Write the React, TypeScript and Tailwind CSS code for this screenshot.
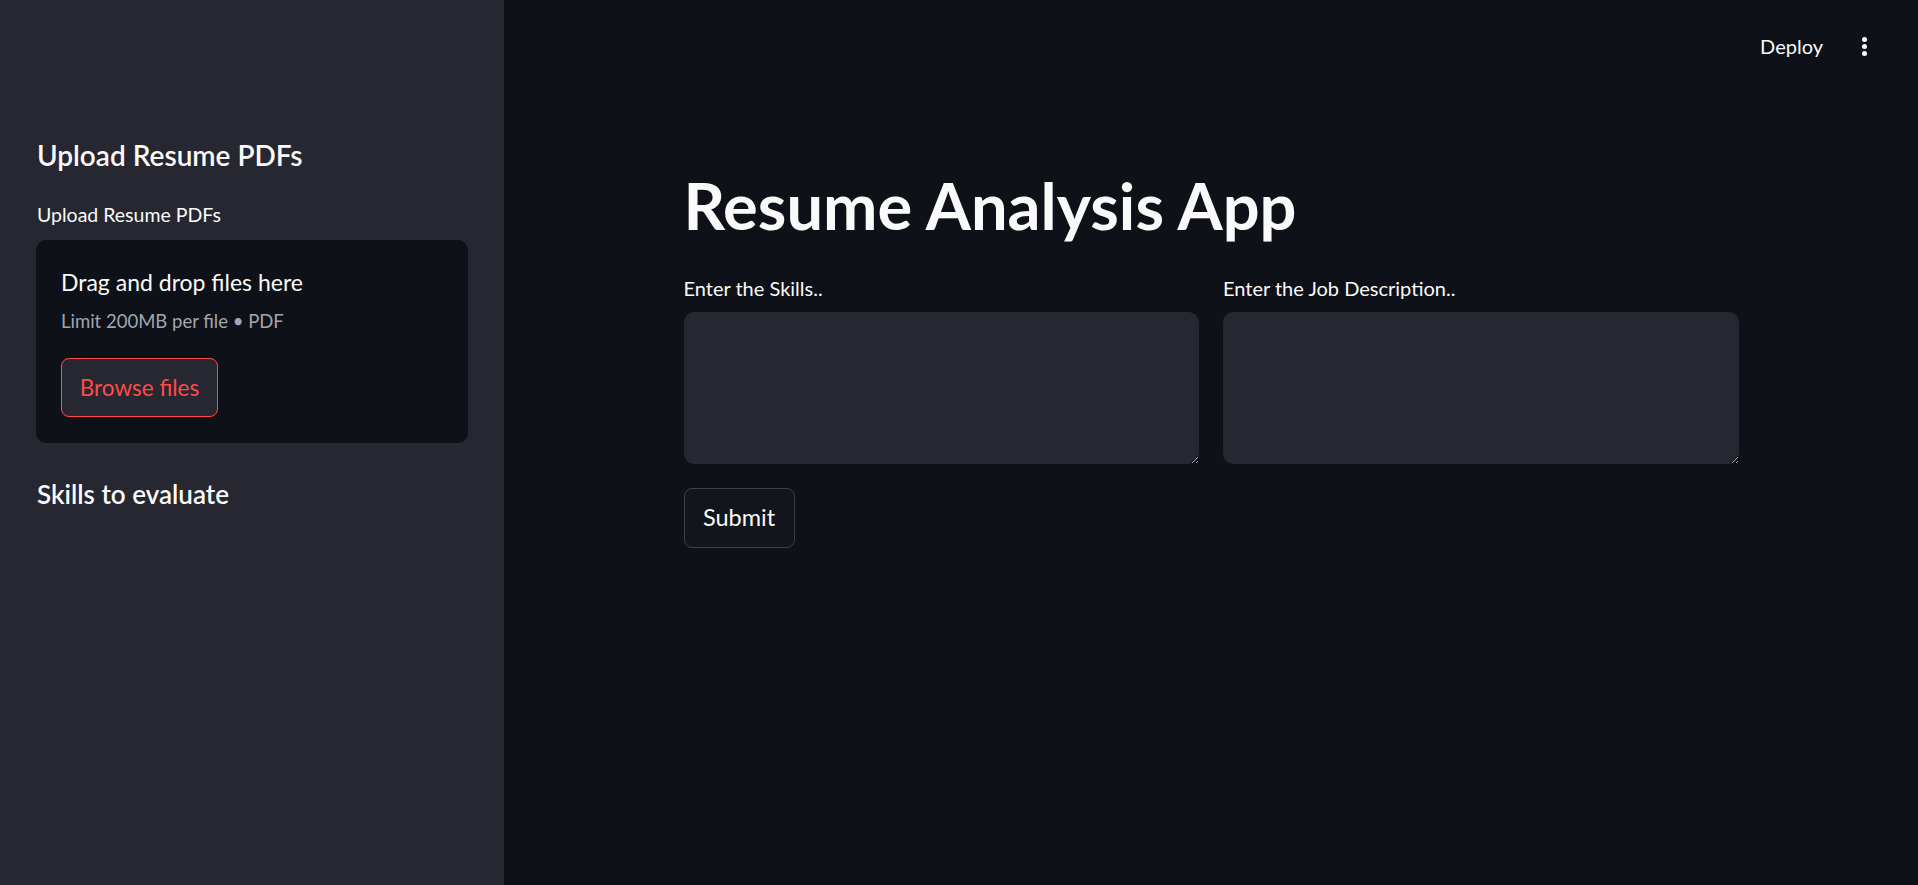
import React from "react";

const font = "font-['Lato',sans-serif]";

const Sidebar = () => {
	return (
		<aside className="w-[504px] shrink-0 h-screen bg-[#262730] px-[36px]">
			<h3 className="mt-[137px] text-[28px] leading-[36px] font-semibold text-[#fafafa] pl-px">
				Upload Resume PDFs
			</h3>
			<p className="mt-[30px] text-[19.5px] leading-[24px] text-[#fafafa] pl-px">Upload Resume PDFs</p>
			<div className="mt-[13px] w-[432px] h-[203px] rounded-[10px] bg-[#0e1117] pl-[25px] pt-[28px]">
				<p className="text-[23px] leading-[28px] text-[#fafafa]">Drag and drop files here</p>
				<p className="mt-[12px] text-[18.5px] leading-[26px] text-[#a3a6b0]">
					Limit 200MB per file • PDF
				</p>
				<button
					type="button"
					className="mt-[24px] w-[157px] h-[59px] rounded-[8px] border border-[#ff4b4b] bg-[#262730] text-[22.5px] text-[#ff4b4b]"
				>
					Browse files
				</button>
			</div>
			<h3 className="mt-[34px] text-[26px] leading-[34px] font-semibold text-[#fafafa] pl-px">
				Skills to evaluate
			</h3>
		</aside>
	);
};

const Field = ({ label }: { label: string }) => (
	<div className="flex flex-col">
		<label className="text-[20px] leading-[24px] text-[#fafafa]">{label}</label>
		<textarea className="mt-[12px] h-[152px] w-full rounded-[10px] bg-[#262730] text-[#fafafa] outline-none p-4 [color-scheme:dark]" />
	</div>
);

export default function App() {
	return (
		<div className={`flex min-h-screen bg-[#0e1117] ${font}`}>
			<Sidebar />
			<main className="flex-1 flex flex-col">
				<header className="flex justify-end items-center pt-[33px] pr-[51px] gap-[39px]">
					<span className="text-[20px] leading-[26px] text-[#fafafa]">Deploy</span>
					<span className="flex flex-col gap-[2px]">
						<span className="w-[5px] h-[5px] rounded-full bg-[#fafafa]" />
						<span className="w-[5px] h-[5px] rounded-full bg-[#fafafa]" />
						<span className="w-[5px] h-[5px] rounded-full bg-[#fafafa]" />
					</span>
				</header>
				<section className="w-[1055px] mx-auto">
					<h1 className="mt-[110px] text-[65px] leading-[72px] font-bold text-[#fafafa]">
						Resume Analysis App
					</h1>
					<div className="mt-[35px] grid grid-cols-2 gap-[24px]">
						<Field label="Enter the Skills.." />
						<Field label="Enter the Job Description.." />
					</div>
					<button
						type="button"
						className="mt-[24px] w-[111px] h-[60px] rounded-[8px] border border-[#3d4048] bg-[#12151c] text-[23.5px] text-[#fafafa]"
					>
						Submit
					</button>
				</section>
			</main>
		</div>
	);
}
